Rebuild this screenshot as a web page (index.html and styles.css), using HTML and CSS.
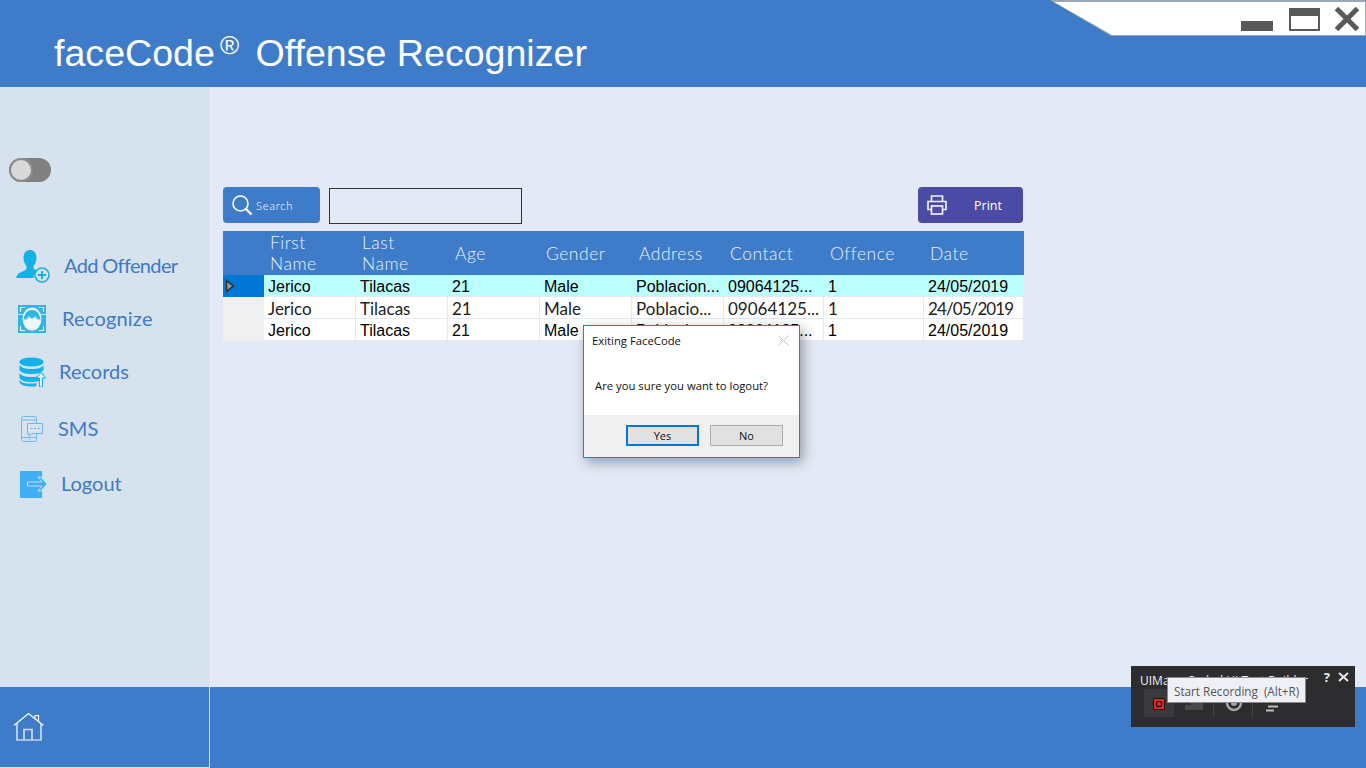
FILE: index.html
```html
<!DOCTYPE html>
<html lang="en">
<head>
  <meta charset="UTF-8">
  <meta name="viewport" content="width=device-width, initial-scale=1.0">
  <title>faceCode Offense Recognizer</title>
  <link rel="stylesheet" href="styles.css">
</head>
<body>

<div class="app">
  <header class="topbar">
    <h1 class="app-title">faceCode<sup class="reg">®</sup> Offense Recognizer</h1>
    <div class="win-tab">
      <svg class="win-shape" width="316" height="37" viewBox="0 0 316 37">
        <polygon points="0,0 316,0 316,36 61,36" fill="#9aa7b8"/>
        <polygon points="4,2 315,2 315,35 62,35" fill="#fff"/>
      </svg>
      <span class="win-min"></span>
      <span class="win-max"></span>
      <svg class="win-close" width="26" height="26" viewBox="0 0 26 26">
        <path d="M2.500 2.500 L23.500 23.500 M23.500 2.500 L2.500 23.500" stroke="#595959" stroke-width="5" fill="none"/>
      </svg>
    </div>
  </header>

  <div class="middle">
    <aside class="sidebar">
      <div class="toggle"><span class="knob"></span></div>
      <nav class="menu">
        <a class="menu-item item-add">
          <svg width="35" height="34" viewBox="0 0 35 34">
            <path d="M14 1c4 0 6.500 3 6.500 8 0 3.500-1.500 6-3 8v2.500c1.500 1 3 2 4 2.500-2.500 1.500-4 4-4 7H0c1-3.500 3-5.500 6.500-6.500 2.500-1 4-2 4-3.500v-2c-1.500-2-3-4.500-3-8C7.500 4 10 1 14 1z" fill="#14b1e7"/>
            <circle cx="26" cy="26" r="7" fill="none" stroke="#14b1e7" stroke-width="1.600"/>
            <path d="M26 22v8M22 26h8" stroke="#14b1e7" stroke-width="2"/>
          </svg>
          <span>Add Offender</span>
        </a>
        <a class="menu-item item-rec">
          <svg width="28" height="28" viewBox="0 0 28 28">
            <rect width="28" height="28" fill="#2fb6e4"/>
            <rect y="9" width="28" height="1" fill="#d6e3ee"/>
            <path d="M2.500 7V2.500H7M21 2.500h4.500V7M25.500 21v4.500H21M7 25.500H2.500V21" fill="none" stroke="#e8f3f8" stroke-width="1.200"/>
            <ellipse cx="14" cy="14" rx="9.500" ry="11.500" fill="#f0f7fb"/>
            <path d="M5.500 15.500C6 9 9 5 14 5s8 4 8.500 10.500c-2.500-.500-4-1-5.500-3.500-1 1.500-2 2-3 2s-2-.500-3-2c-1 2.500-3 3-5.500 3.500z" fill="#2fb6e4"/>
            <path d="M6 15c2-.500 3.500-1.500 5-3.500 1 1.500 2 2 3 2s2-.500 3-2c1.500 2 3 3 5 3.500" fill="none" stroke="#f0f7fb" stroke-width=".8"/>
          </svg>
          <span>Recognize</span>
        </a>
        <a class="menu-item item-records">
          <svg width="27" height="30" viewBox="0 0 27 30">
            <ellipse cx="12.500" cy="5" rx="12" ry="4.500" fill="#14b1e7"/>
            <path d="M.500 8c2 3 6 4 12 4s10-1 12-4v5c-2 3-6 4-12 4s-10-1-12-4z" fill="#14b1e7"/>
            <path d="M.500 16c2 3 6 4 12 4s10-1 12-4v5c-2 3-6 4-12 4s-10-1-12-4z" fill="#14b1e7"/>
            <path d="M.500 23c2 3 6 3.500 12 3.500 2 0 4 0 5-.500v3c-1 .500-3 .500-5 .500-6 0-10-1-12-4z" fill="#14b1e7"/>
            <path d="M20.500 30v-9h-3l4.500-5.500 4.500 5.500h-3v9z" fill="#e6f2f9" stroke="#14b1e7" stroke-width="1"/>
          </svg>
          <span>Records</span>
        </a>
        <a class="menu-item item-sms">
          <svg width="24" height="26" viewBox="0 0 24 26" fill="none" stroke="#6db8f0" stroke-width="1">
            <rect x="1.500" y=".500" width="15" height="25" rx="2"/>
            <path d="M1.500 4h15M1.500 21.500h15M9 23.500h1"/>
            <path d="M1.500 6v13" stroke-dasharray="1 2"/>
            <path d="M7.500 7.500h15v10h-10.500l-3 2.500v-2.500h-1.500z" fill="#d6e3ee"/>
            <path d="M11 12.500h1.500M14.500 12.500h1.500M18 12.500h1.500" stroke="#4a9fe0"/>
          </svg>
          <span>SMS</span>
        </a>
        <a class="menu-item item-logout">
          <svg width="28" height="27" viewBox="0 0 28 27">
            <rect width="22" height="27" rx="1" fill="#40aef5"/>
            <polygon points="7.500,11 22,11 18,6 21,6 27,13 21,20 18,20 22,15 7.500,15" fill="#40aef5" stroke="#c4e2f8" stroke-width="1"/>
          </svg>
          <span>Logout</span>
        </a>
      </nav>
    </aside>

    <main class="content">
      <div class="toolbar">
        <button class="btn-search">
          <svg width="22" height="22" viewBox="0 0 22 22" fill="none" stroke="#fff">
            <circle cx="9.500" cy="9.500" r="7.500" stroke-width="1.600"/>
            <path d="M15 15l5.500 5.500" stroke-width="2.400"/>
          </svg>
          <span>Search</span>
        </button>
        <div class="search-box"></div>
        <button class="btn-print">
          <svg width="20" height="20" viewBox="0 0 20 20" fill="none" stroke="#eef" stroke-width="1.700">
            <path d="M4.500 6V1h11v5"/>
            <path d="M4.500 14.500H1V6.500h18v8h-3.500"/>
            <rect x="4.500" y="11" width="11" height="8"/>
          </svg>
          <span>Print</span>
        </button>
      </div>

      <table class="grid">
        <colgroup>
          <col class="c-head">
          <col class="c-92"><col class="c-92"><col class="c-92"><col class="c-92"><col class="c-92">
          <col class="c-100"><col class="c-100"><col class="c-100">
        </colgroup>
        <thead>
          <tr>
            <th></th>
            <th>First<br>Name</th>
            <th>Last<br>Name</th>
            <th class="shift">Age</th>
            <th>Gender</th>
            <th class="shift">Address</th>
            <th>Contact</th>
            <th>Offence</th>
            <th>Date</th>
          </tr>
        </thead>
        <tbody>
          <tr class="selected">
            <td class="row-head">
              <svg class="arrow" width="10" height="14" viewBox="0 0 10 14"><polygon points="1.500,1.500 8.500,7 1.500,12.500" fill="#9a9a9a" stroke="#333" stroke-width="1.600"/></svg>
            </td>
            <td>Jerico</td><td>Tilacas</td><td>21</td><td>Male</td>
            <td>Poblacion...</td><td>09064125...</td><td>1</td><td>24/05/2019</td>
          </tr>
          <tr class="alt">
            <td class="row-head"></td>
            <td>Jerico</td><td>Tilacas</td><td>21</td><td>Male</td>
            <td>Poblacio...</td><td>09064125...</td><td>1</td><td class="date">24/05/2019</td>
          </tr>
          <tr>
            <td class="row-head"></td>
            <td>Jerico</td><td>Tilacas</td><td>21</td><td>Male</td>
            <td>Poblacion...</td><td>09064125...</td><td>1</td><td>24/05/2019</td>
          </tr>
        </tbody>
      </table>
    </main>
  </div>

  <footer class="bottombar">
    <div class="home-cell">
      <svg width="32" height="30" viewBox="0 0 32 30" fill="none" stroke="#fff" stroke-width="1.200">
        <path d="M1 13.500L15.500 1.500 30.500 13.500"/>
        <path d="M4 11.500V28h24V11.500"/>
        <path d="M11 28V17.500h8V28" stroke="#d5e4f5" stroke-width="1.600"/>
        <path d="M22 6.500V3.500h3.500v6" stroke-width="1.200"/>
      </svg>
    </div>
  </footer>
</div>

<div class="dialog">
  <div class="dialog-body">
    <div class="dialog-title">
      <span>Exiting FaceCode</span>
      <svg width="11" height="11" viewBox="0 0 11 11"><path d="M.500 .500l10 10M10.500 .500l-10 10" stroke="#c4c4c4" stroke-width="1"/></svg>
    </div>
    <p class="dialog-text">Are you sure you want to logout?</p>
  </div>
  <div class="dialog-foot">
    <button class="dlg-btn dlg-default">Yes</button>
    <button class="dlg-btn">No</button>
  </div>
</div>

<div class="builder">
  <div class="builder-title">
    <span class="builder-name">UIMap - Coded UI Test Builder</span>
    <span class="builder-ctrl">?</span>
    <svg class="builder-x" width="11" height="10" viewBox="0 0 11 10"><path d="M1 1l9 8M10 1l-9 8" stroke="#e8e8e8" stroke-width="2"/></svg>
  </div>
  <div class="builder-tools">
    <div class="tool tool-active">
      <svg width="12" height="12" viewBox="0 0 12 12">
        <rect x=".500" y=".500" width="11" height="11" rx="1" fill="#f0281e" stroke="#111"/>
        <circle cx="6" cy="6" r="2.700" fill="none" stroke="#111" stroke-width="1.300"/>
      </svg>
    </div>
    <div class="tool tool-sep">
      <svg width="18" height="14" viewBox="0 0 18 14"><path d="M0 9h6V0h12v14H0z" fill="#4a4a4a"/></svg>
    </div>
    <div class="tool tool-sep tool-narrow">
      <svg width="18" height="18" viewBox="0 0 18 18" fill="none"><circle cx="9" cy="9" r="7" stroke="#a8a8a8" stroke-width="2.400"/><circle cx="9" cy="9" r="3" fill="#a8a8a8"/></svg>
    </div>
    <div class="tool">
      <svg width="14" height="18" viewBox="0 0 14 18"><path d="M7 3h7M3 8h9M2 12.500h10M0 16.500h8" stroke="#bdbdbd" stroke-width="2"/></svg>
    </div>
  </div>
  <div class="builder-tip">Start Recording&nbsp; (Alt+R)</div>
</div>

</body>
</html>
```

FILE: styles.css
```css
html, body {
  margin: 0;
  padding: 0;
  height: 100%;
  overflow: hidden;
}
body {
  font-family: "Liberation Sans", Arial, sans-serif;
  background-color: #e3eaf6;
}
.app {
  display: flex;
  flex-direction: column;
  height: 768px;
}

/* top bar */
.topbar {
  height: 87px;
  flex: none;
  background-color: #3e7bc8;
  position: relative;
}
.app-title {
  margin: 0;
  padding: 31px 0 0 54px;
  font-size: 37.600px;
  line-height: 44px;
  font-weight: normal;
  color: #fff;
  white-space: nowrap;
}
.reg {
  font-size: 26px;
  line-height: 0;
  vertical-align: 12px;
  margin: 0 6px 0 5px;
}
.win-tab {
  position: absolute;
  top: 0;
  right: 0;
  width: 316px;
  height: 37px;
}
.win-shape {
  display: block;
}
.win-min {
  position: absolute;
  left: 191px;
  top: 21px;
  width: 32px;
  height: 10px;
  background-color: #595959;
}
.win-max {
  position: absolute;
  left: 239px;
  top: 8px;
  width: 31px;
  height: 23px;
  box-sizing: border-box;
  border: 2px solid #595959;
  border-top-width: 8px;
}
.win-close {
  position: absolute;
  left: 284px;
  top: 6px;
}

/* middle */
.middle {
  flex: 1;
  display: flex;
  min-height: 0;
}
.sidebar {
  width: 210px;
  flex: none;
  background-color: #d6e3ee;
  padding-top: 71px;
  box-sizing: border-box;
}
.toggle {
  width: 42px;
  height: 24px;
  margin-left: 9px;
  border-radius: 12px;
  background-color: #808080;
}
.knob {
  display: block;
  width: 24px;
  height: 24px;
  box-sizing: border-box;
  border-radius: 12px;
  background-color: #d9d9d9;
  border: 2px solid #8c8c8c;
}
.menu {
  margin-top: 59px;
  display: grid;
  grid-template-rows: 53px 53px 57px 55px 50px;
}
.menu-item {
  display: flex;
  align-items: center;
  height: 50px;
  font-family: "Lato", sans-serif;
  font-size: 20px;
  color: #4079c6;
}
.menu-item span {
  padding-bottom: 2px;
}
.item-add { padding-left: 16px; gap: 13px; letter-spacing: -.65px; }
.item-rec { padding-left: 18px; gap: 16px; letter-spacing: .2px; }
.item-records { padding-left: 19px; gap: 13px; }
.item-sms { padding-left: 20px; gap: 14px; }
.item-logout { padding-left: 20px; gap: 13px; }

/* content */
.content {
  flex: 1;
  padding: 100px 0 0 13px;
}
.toolbar {
  display: flex;
  align-items: flex-start;
  width: 800px;
  height: 44px;
}
.btn-search, .btn-print {
  display: flex;
  align-items: center;
  height: 36px;
  border: none;
  border-radius: 4px;
  color: #fff;
  padding: 0;
}
.btn-search {
  width: 97px;
  padding-left: 8px;
  gap: 3px;
  background-color: #3e7bc8;
  color: #fff;
  font-family: "Lato", sans-serif;
  font-size: 11.500px;
  font-weight: 300;
  letter-spacing: .7px;
}
.search-box {
  width: 193px;
  height: 36px;
  box-sizing: border-box;
  margin: 1px 0 0 9px;
  border: 1px solid #333;
}
.btn-print {
  width: 105px;
  margin-left: auto;
  padding-left: 9px;
  gap: 27px;
  background-color: #4b4ba5;
  font-family: "Open Sans", sans-serif;
  font-size: 12.500px;
}
.grid {
  border-collapse: separate;
  border-spacing: 0;
  table-layout: fixed;
  width: 801px;
  font-size: 16px;
}
.c-head { width: 41px; }
.c-92 { width: 92px; }
.c-100 { width: 100px; }
.grid th {
  height: 44px;
  padding: 0 0 0 6px;
  background-color: #3e7bc8;
  color: #e8f0fa;
  font-family: "Lato", sans-serif;
  font-size: 17.500px;
  font-weight: 300;
  line-height: 21px;
  text-align: left;
  letter-spacing: .5px;
}
.grid th.shift {
  padding-left: 7px;
}
.grid td {
  height: 22px;
  padding: 3px 0 0 4px;
  box-sizing: border-box;
  background-color: #fff;
  border-right: 1px solid #e3eaf6;
  border-bottom: 1px solid #e3eaf6;
  color: #000;
  line-height: 18px;
  vertical-align: top;
  white-space: nowrap;
  overflow: hidden;
}
.grid td.row-head {
  background-color: #f0f0f0;
  border: none;
  padding: 4px 0 0 2px;
}
.selected td {
  background-color: #bbffff;
}
.grid .selected td.row-head {
  background-color: #0078d7;
}
.grid .alt td {
  font-family: "Lato", sans-serif;
  font-size: 17px;
  color: #222;
}
.grid .alt td.date {
  letter-spacing: -.9px;
}
.arrow {
  display: block;
}

/* bottom bar */
.bottombar {
  height: 81px;
  flex: none;
  background-color: #3e7bc8;
}
.home-cell {
  width: 210px;
  height: 81px;
  padding: 25px 0 0 13px;
  box-sizing: border-box;
  border-right: 1px solid #dbe6f4;
  border-bottom: 1px solid #dbe6f4;
}
.home-cell svg {
  display: block;
}

/* logout dialog */
.dialog {
  position: absolute;
  left: 583px;
  top: 325px;
  width: 217px;
  height: 133px;
  box-sizing: border-box;
  border: 1px solid #2b7fd0;
  background-color: #fff;
  box-shadow: 3px 4px 12px rgba(0, 0, 0, 0.35);
  font-family: "Open Sans", sans-serif;
  font-size: 11.300px;
  color: #111;
  display: flex;
  flex-direction: column;
}
.dialog-body {
  flex: 1;
}
.dialog-title {
  display: flex;
  justify-content: space-between;
  align-items: center;
  padding: 7px 10px 0 8px;
}
.dialog-text {
  margin: 30px 0 0 11px;
}
.dialog-foot {
  height: 42px;
  flex: none;
  background-color: #f0f0f0;
  display: flex;
  gap: 11px;
  padding: 10px 0 0 42px;
  box-sizing: border-box;
}
.dlg-btn {
  width: 73px;
  height: 21px;
  box-sizing: border-box;
  border: 1px solid #adadad;
  background-color: #e1e1e1;
  font-family: "Open Sans", sans-serif;
  font-size: 11px;
  color: #111;
  padding: 0;
}
.dlg-default {
  border: 2px solid #0078d7;
}

/* coded ui test builder */
.builder {
  position: absolute;
  left: 1131px;
  top: 666px;
  width: 224px;
  height: 61px;
  background-color: #2d2d30;
  color: #eee;
  font-family: "Open Sans", sans-serif;
  font-size: 12px;
}
.builder-title {
  display: flex;
  align-items: center;
  height: 24px;
  padding: 0 6px 0 9px;
  gap: 8px;
  white-space: nowrap;
}
.builder-name {
  flex: 1;
  padding-top: 4px;
}
.builder-ctrl {
  font-weight: bold;
  font-size: 13px;
  margin-bottom: 2px;
}
.builder-x {
  margin-bottom: 2px;
}
.builder-tools {
  display: flex;
  margin: -1px 0 0 13px;
}
.tool {
  width: 39px;
  height: 28px;
  display: flex;
  align-items: center;
  justify-content: center;
}
.tool-active {
  width: 30px;
  background-color: #3a3a3c;
  padding-top: 1px;
  box-sizing: border-box;
}
.tool-sep {
  border-right: 1px solid #444;
}
.tool-narrow {
  width: 36px;
  padding-left: 2px;
}
.builder-tip {
  position: absolute;
  left: 36px;
  top: 11px;
  width: 139px;
  height: 26px;
  box-sizing: border-box;
  background-color: #eef0f6;
  border: 1px solid #8a8a8a;
  color: #555;
  font-size: 11.700px;
  line-height: 26px;
  padding-left: 6px;
  white-space: nowrap;
}
```
